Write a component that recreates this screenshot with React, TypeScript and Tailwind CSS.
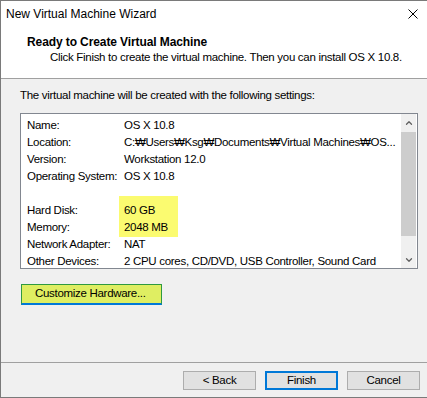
import { ChevronUp, ChevronDown } from 'lucide-react'

const rows: [string, string][] = [
  ['Name:', 'OS X 10.8'],
  ['Location:', 'C:₩Users₩Ksg₩Documents₩Virtual Machines₩OS...'],
  ['Version:', 'Workstation 12.0'],
  ['Operating System:', 'OS X 10.8'],
  ['', ''],
  ['Hard Disk:', '60 GB'],
  ['Memory:', '2048 MB'],
  ['Network Adapter:', 'NAT'],
  ['Other Devices:', '2 CPU cores, CD/DVD, USB Controller, Sound Card'],
]

function WizButton({ label, primary }: { label: string; primary?: boolean }) {
  return (
    <button
      className={
        'w-[73px] h-[19px] flex items-center justify-center bg-[#e1e1e1] leading-none ' +
        (primary ? 'border-2 border-[#0078d7]' : 'border border-[#adadad]')
      }
    >
      {label}
    </button>
  )
}

export default function App() {
  return (
    <div
      className="w-[427px] h-[398px] bg-[#f0f0f0] border-l border-b border-t border-[#7a7a7a] flex flex-col text-black overflow-hidden text-[11.5px] tracking-[-0.3px]"
      style={{ fontFamily: '"Liberation Sans", Arial, sans-serif' }}
    >
      {/* Title bar */}
      <div className="h-[29px] bg-white flex items-center justify-between pl-[5px] pr-[9px]">
        <span className="text-[12px] tracking-normal leading-[16px] mb-[3px]">New Virtual Machine Wizard</span>
        <svg width="10" height="10" viewBox="0 0 10 10" className="mb-[3px]">
          <path d="M0.5 0.5 L9.5 9.5 M9.5 0.5 L0.5 9.5" stroke="#000" strokeWidth="1" fill="none" />
        </svg>
      </div>

      {/* Header */}
      <div className="h-[49px] bg-white border-b border-[#a0a0a0] pt-[4px]">
        <div className="pl-[26px] leading-[16px] font-bold text-[12px] tracking-[-0.1px]">Ready to Create Virtual Machine</div>
        <div className="pl-[49px] leading-[16px] mt-[-1px] whitespace-nowrap">
          Click Finish to create the virtual machine. Then you can install OS X 10.8.
        </div>
      </div>

      {/* Body */}
      <div className="flex-1 flex flex-col pl-[19px] pt-[8px]">
        <div className="leading-[16px]">The virtual machine will be created with the following settings:</div>

        <div className="mt-[10px] w-[398px] h-[156px] border border-[#828790] bg-white flex relative">
          <span className="absolute left-[98px] top-[82px] w-[59px] h-[41px] bg-[#fbfb70]" />
          <div className="relative flex-1 pt-[3px] pl-[6px] overflow-hidden">
            {rows.map(([k, v], i) => (
              <div key={i} className="h-[17px] flex items-center whitespace-nowrap">
                <span className="w-[97px] shrink-0">{k}</span>
                <span>{v}</span>
              </div>
            ))}
          </div>
          <div className="w-[15px] mr-[1px] bg-[#f0f0f0] flex flex-col items-center">
            <div className="h-[18px] flex items-center justify-center">
              <ChevronUp size={10} strokeWidth={3} color="#606060" />
            </div>
            <div className="w-full h-[104px] bg-[#cdcdcd]" />
            <div className="flex-1 flex items-end justify-center pb-[3px]">
              <ChevronDown size={10} strokeWidth={3} color="#606060" />
            </div>
          </div>
        </div>

        <div className="mt-[15px] ml-[1px]">
          <button className="w-[141px] h-[21px] bg-[#dfee62] border border-[#2f9a40] border-b-2 border-b-[#0078d7] leading-none text-left pl-[13px] whitespace-nowrap">
            Customize Hardware...
          </button>
        </div>
      </div>

      {/* Footer */}
      <div className="h-[35px] border-t border-[#a0a0a0] flex justify-end gap-[9px] pr-[7px] pt-[8px]">
        <WizButton label="< Back" />
        <WizButton label="Finish" primary />
        <WizButton label="Cancel" />
      </div>
    </div>
  )
}
